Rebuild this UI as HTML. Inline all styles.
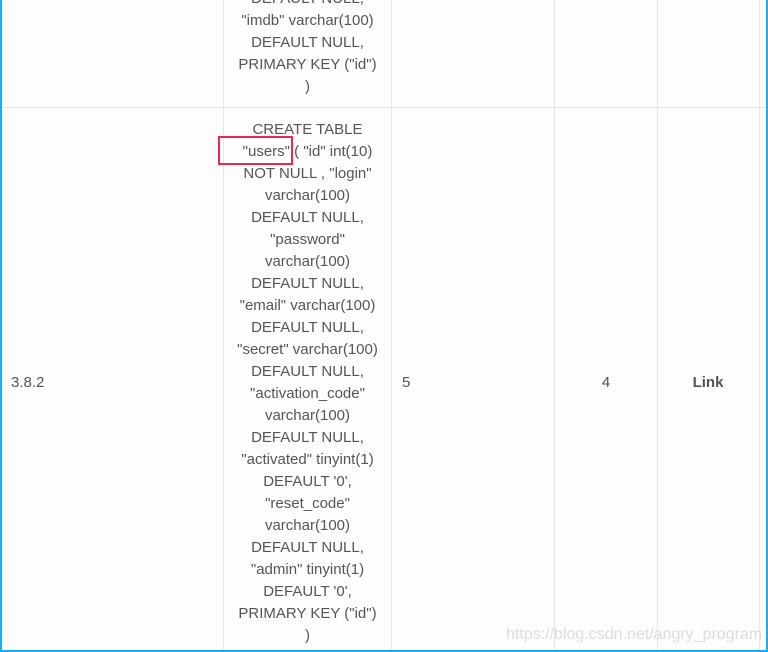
<!DOCTYPE html>
<html><head><style>
body{margin:0;width:768px;height:652px;background:#fdfdfd;font-family:"Liberation Sans",sans-serif;color:#555;font-size:15px;position:relative;overflow:hidden}
.v{position:absolute;top:0;bottom:0;width:1px;background:#e6e6e6}
.h{position:absolute;left:0;right:0;height:1px;background:#e6e6e6}
.t{position:absolute;line-height:22px;text-align:center}
.frame{position:absolute;left:0;top:-3px;width:764px;height:651px;border:2px solid #1aaef0}
</style></head><body>
<div class="v" style="left:223px"></div>
<div class="v" style="left:391px"></div>
<div class="v" style="left:554px"></div>
<div class="v" style="left:657px"></div>
<div class="v" style="left:759px"></div>
<div class="h" style="top:107px"></div>
<div class="t" style="left:224px;width:167px;top:-12px">DEFAULT NULL,<br>"imdb" varchar(100)<br>DEFAULT NULL,<br>PRIMARY KEY ("id")<br>)</div>
<div class="t" style="left:224px;width:167px;top:119px">CREATE TABLE<br>"users" ( "id" int(10)<br>NOT NULL , "login"<br>varchar(100)<br>DEFAULT NULL,<br>"password"<br>varchar(100)<br>DEFAULT NULL,<br>"email" varchar(100)<br>DEFAULT NULL,<br>"secret" varchar(100)<br>DEFAULT NULL,<br>"activation_code"<br>varchar(100)<br>DEFAULT NULL,<br>"activated" tinyint(1)<br>DEFAULT '0',<br>"reset_code"<br>varchar(100)<br>DEFAULT NULL,<br>"admin" tinyint(1)<br>DEFAULT '0',<br>PRIMARY KEY ("id")<br>)</div>
<div class="t" style="left:11px;top:372px">3.8.2</div>
<div class="t" style="left:402px;top:372px">5</div>
<div class="t" style="left:555px;width:102px;top:372px">4</div>
<div class="t" style="left:657px;width:102px;top:372px;font-weight:bold">Link</div>
<div style="position:absolute;left:218px;top:136px;width:71px;height:25px;border:2px solid #e8284e"></div>
<div style="position:absolute;left:506px;top:626px;font-size:16px;color:#dcdcdc">https://blog.csdn.net/angry_program</div>
<div class="frame"></div>
</body></html>
